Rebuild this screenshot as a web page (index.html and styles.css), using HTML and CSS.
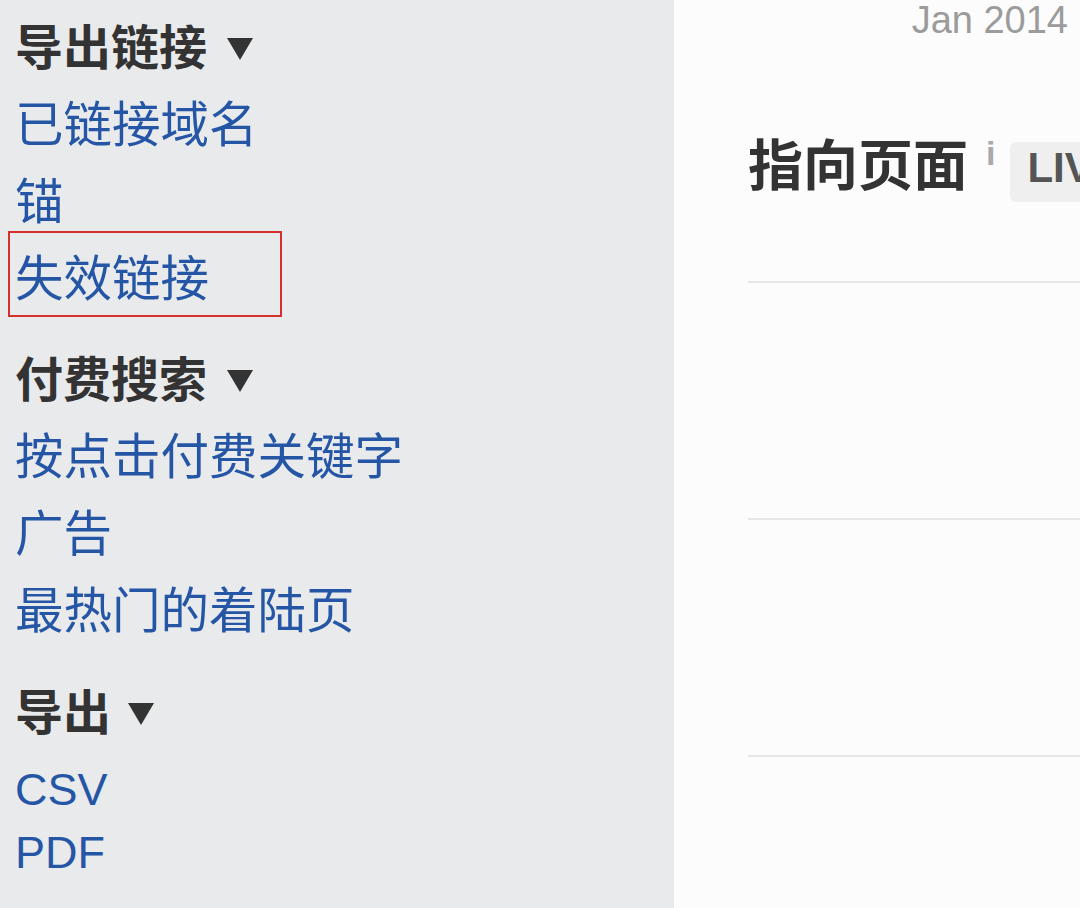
FILE: index.html
```html
<!DOCTYPE html>
<html lang="zh-CN">
  <head>
    <meta charset="UTF-8" />
    <meta name="viewport" content="width=device-width, initial-scale=1.0" />
    <title>指向页面</title>
    <link rel="stylesheet" href="styles.css">
  </head>
  <body>
    <!-- Left navigation -->
    <nav class="sidebar">
      <div class="nav-section">
        <h3 class="nav-title">导出链接<span class="caret"></span></h3>
        <a href="#" class="nav-link">已链接域名</a>
        <a href="#" class="nav-link">锚</a>
        <a href="#" class="nav-link marked">失效链接</a>
      </div>

      <div class="nav-section">
        <h3 class="nav-title">付费搜索<span class="caret"></span></h3>
        <a href="#" class="nav-link">按点击付费关键字</a>
        <a href="#" class="nav-link">广告</a>
        <a href="#" class="nav-link">最热门的着陆页</a>
      </div>

      <div class="nav-section">
        <h3 class="nav-title">导出<span class="caret caret-short"></span></h3>
        <div class="export-links">
          <a href="#" class="nav-link">CSV</a>
          <a href="#" class="nav-link">PDF</a>
        </div>
      </div>
    </nav>

    <!-- Main content -->
    <main class="main">
      <div class="date">Jan 2014</div>

      <div class="page-title">
        <h1>指向页面</h1>
        <span class="info">i</span>
        <span class="badge">LIVE</span>
      </div>

      <div class="rows">
        <div class="row"></div>
        <div class="row"></div>
        <div class="row"></div>
      </div>
    </main>
  </body>
</html>
```

FILE: styles.css
```css
html,
body {
  margin: 0;
  height: 908px;
  overflow: hidden;
}
body {
  display: flex;
  font-family: "Liberation Sans", "Noto Sans CJK SC", sans-serif;
  background: #fcfcfc;
}

/* Sidebar */
.sidebar {
  width: 674px;
  flex-shrink: 0;
  box-sizing: border-box;
  padding: 6px 0 0 15px;
  background: #e9eaec;
  font-family: "Noto Sans CJK SC", sans-serif;
}
.nav-section + .nav-section {
  margin-top: 24px;
}
.nav-section:last-child {
  margin-top: 25px;
}
.nav-title {
  display: flex;
  align-items: center;
  margin: 0;
  font-size: 48px;
  line-height: 77px;
  font-weight: bold;
  color: #333;
}
.caret {
  width: 0;
  height: 0;
  margin: 9px 0 0 20px;
  border-left: 13px solid transparent;
  border-right: 13px solid transparent;
  border-top: 22px solid #333;
}
.caret-short {
  margin-left: 17px;
}
.nav-link {
  display: block;
  font-size: 48.5px;
  line-height: 77px;
  color: #2556a6;
  text-decoration: none;
}
.marked {
  position: relative;
}
.marked::after {
  content: "";
  position: absolute;
  left: -7px;
  top: -6px;
  width: 274px;
  height: 86px;
  box-sizing: border-box;
  border: 2px solid #d6302d;
}
.export-links {
  margin-top: 10px;
}
.export-links .nav-link {
  font-family: "Liberation Sans", sans-serif;
  font-size: 45px;
  line-height: 63px;
}

/* Main panel */
.main {
  flex: 1;
  min-width: 0;
  overflow: hidden;
  padding-left: 74px;
}
.date {
  padding-right: 12px;
  text-align: right;
  font-size: 38px;
  line-height: 40px;
  color: #9b9b9b;
}
.page-title {
  display: flex;
  align-items: flex-start;
  margin-top: 91px;
  white-space: nowrap;
}
.page-title h1 {
  margin: 0;
  font-family: "Noto Sans CJK SC", sans-serif;
  font-size: 55px;
  line-height: 60px;
  font-weight: bold;
  color: #333;
}
.info {
  margin: 5px 0 0 18px;
  font-size: 34px;
  line-height: 34px;
  font-weight: bold;
  color: #aaa;
}
.badge {
  margin: 11px 0 0 15px;
  padding: 0 17px 8px;
  border-radius: 6px;
  background: #efefef;
  font-size: 42px;
  line-height: 52px;
  font-weight: bold;
  color: #555;
}
.rows {
  margin-top: 79px;
}
.row {
  height: 237px;
  box-sizing: border-box;
  border-top: 2px solid #e6e6e6;
}
```
